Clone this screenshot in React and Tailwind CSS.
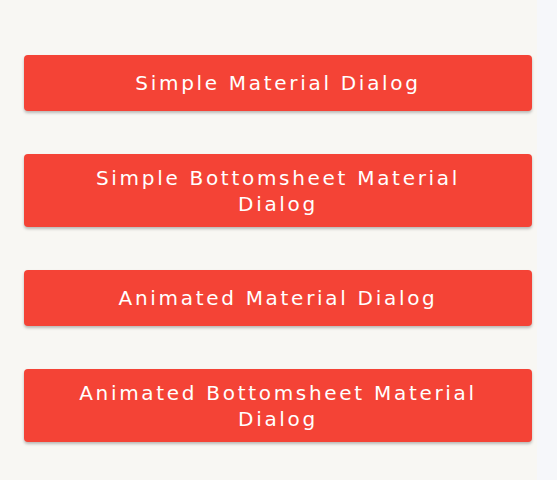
const buttons = [
  { label: "Simple Material Dialog", h: "h-[56px]" },
  { label: "Simple Bottomsheet Material Dialog", h: "h-[73px]" },
  { label: "Animated Material Dialog", h: "h-[56px]" },
  { label: "Animated Bottomsheet Material Dialog", h: "h-[73px]" },
];

export default function App() {
  return (
    <div className="flex min-h-[480px] bg-[#f8f7f3]">
      <div className="w-[537px] pt-[55px] pl-[24px] pr-[5px] flex flex-col gap-[43px]">
        {buttons.map((b) => (
          <button
            key={b.label}
            type="button"
            className={`${b.h} w-full rounded-[4px] bg-[#f44336] shadow-[0_2px_3px_rgba(0,0,0,0.25)] px-[40px] flex items-center justify-center text-center text-white text-[20px] leading-[26px] tracking-[2.7px] font-["DejaVu_Sans",sans-serif]`}
          >
            {b.label}
          </button>
        ))}
      </div>
      <div className="flex-1 bg-[#f6f7fa]" />
    </div>
  );
}
